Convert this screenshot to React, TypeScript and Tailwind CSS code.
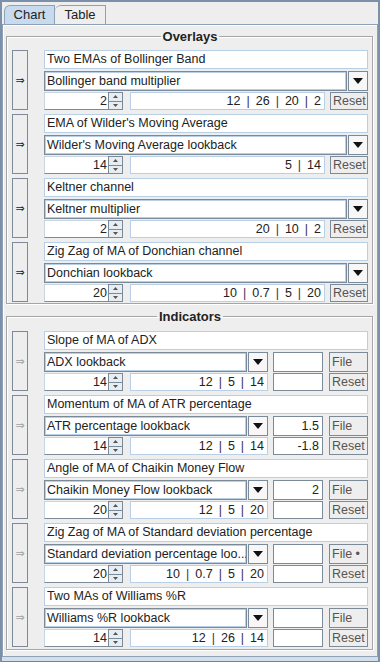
import React from "react";

type Overlay = { title: string; combo: string; spin: string; values: string };
type Indicator = Overlay & { top: string; bottom: string; file: string };

const overlays: Overlay[] = [
  { title: "Two EMAs of Bollinger Band", combo: "Bollinger band multiplier", spin: "2", values: "12 | 26 | 20 | 2" },
  { title: "EMA of Wilder's Moving Average", combo: "Wilder's Moving Average lookback", spin: "14", values: "5 | 14" },
  { title: "Keltner channel", combo: "Keltner multiplier", spin: "2", values: "20 | 10 | 2" },
  { title: "Zig Zag of MA of Donchian channel", combo: "Donchian lookback", spin: "20", values: "10 | 0.7 | 5 | 20" },
];

const indicators: Indicator[] = [
  { title: "Slope of MA of ADX", combo: "ADX lookback", spin: "14", values: "12 | 5 | 14", top: "", bottom: "", file: "File" },
  { title: "Momentum of MA of ATR percentage", combo: "ATR percentage lookback", spin: "14", values: "12 | 5 | 14", top: "1.5", bottom: "-1.8", file: "File" },
  { title: "Angle of MA of Chaikin Money Flow", combo: "Chaikin Money Flow lookback", spin: "20", values: "12 | 5 | 20", top: "2", bottom: "", file: "File" },
  { title: "Zig Zag of MA of Standard deviation percentage", combo: "Standard deviation percentage loo...", spin: "20", values: "10 | 0.7 | 5 | 20", top: "", bottom: "", file: "File •" },
  { title: "Two MAs of Williams %R", combo: "Williams %R lookback", spin: "14", values: "12 | 26 | 14", top: "", bottom: "", file: "File" },
];

function ArrowButton({ enabled }: { enabled: boolean }) {
  return (
    <div
      className={`w-[16px] shrink-0 flex items-center justify-center border border-[#7a8a99] bg-[#eeeeee] text-[11px] leading-none font-['DejaVu_Sans',sans-serif] ${
        enabled ? "text-[#222]" : "text-[#a0a0a0]"
      }`}
    >
      ⇒
    </div>
  );
}

function Combo({ text, className }: { text: string; className: string }) {
  return (
    <div className={`h-[20px] flex ${className}`}>
      <div className="flex-1 min-w-0 flex items-center border border-[#7a8a99] shadow-[inset_1px_1px_0_#b8cfe5,inset_-1px_-1px_0_#b8cfe5] bg-white px-[2px] whitespace-nowrap overflow-hidden">
        {text}
      </div>
      <div className="w-[20px] shrink-0 ml-[1px] flex items-center justify-center border border-[#7a8a99] bg-[#f7f7f7]">
        <svg width="10" height="6" viewBox="0 0 10 6">
          <path d="M0 0h10L5 6z" fill="#111" />
        </svg>
      </div>
    </div>
  );
}

function Spinner({ value, className }: { value: string; className: string }) {
  return (
    <div className={`flex h-[18px] ${className}`}>
      <div className="flex-1 flex items-center justify-end pr-[1px] bg-white border-t border-l border-b border-t-[#c9d6e2] border-l-[#c9d6e2] border-b-[#7a8a99]">
        {value}
      </div>
      <div className="w-[15px] shrink-0 flex flex-col border border-[#7a8a99] bg-[#e8edf2]">
        <div className="flex-1 flex items-center justify-center border-b border-[#7a8a99]">
          <svg width="5" height="3" viewBox="0 0 5 3">
            <path d="M0 3h5L2.5 0z" fill="#555" />
          </svg>
        </div>
        <div className="flex-1 flex items-center justify-center">
          <svg width="5" height="3" viewBox="0 0 5 3">
            <path d="M0 0h5L2.5 3z" fill="#555" />
          </svg>
        </div>
      </div>
    </div>
  );
}

function Values({ text, className }: { text: string; className: string }) {
  const parts = text.split(" | ");
  return (
    <div className={`h-[18px] flex items-center justify-end pr-[3px] bg-white border border-[#b8cfe5] whitespace-nowrap ${className}`}>
      {parts.map((p, i) => (
        <React.Fragment key={i}>
          {i > 0 && <span className="px-[6px] text-[#3b2f5a]">|</span>}
          <span>{p}</span>
        </React.Fragment>
      ))}
    </div>
  );
}

function SmallField({ value, className }: { value: string; className: string }) {
  return (
    <div className={`w-[50px] flex items-center justify-end pr-[3px] bg-white border border-[#7a8a99] shadow-[inset_-1px_-1px_0_#ffffff] ${className}`}>
      {value}
    </div>
  );
}

function SmallButton({ label, className }: { label: string; className: string }) {
  return (
    <div className={`flex items-center pl-[2px] border border-[#7a8a99] bg-[#eeeeee] text-[#555] whitespace-nowrap overflow-hidden ${className}`}>
      {label}
    </div>
  );
}

function TitleField({ text }: { text: string }) {
  return (
    <div className="h-[19px] flex items-center px-[2px] bg-white border border-[#b8cfe5] whitespace-nowrap overflow-hidden">
      {text}
    </div>
  );
}

function OverlayRow({ row }: { row: Overlay }) {
  return (
    <div className="flex h-[60px]">
      <ArrowButton enabled />
      <div className="flex-1 ml-[16px] flex flex-col">
        <TitleField text={row.title} />
        <Combo text={row.combo} className="mt-[2px]" />
        <div className="flex mt-[1px]">
          <Spinner value={row.spin} className="w-[79px]" />
          <Values text={row.values} className="flex-1 ml-[7px]" />
          <SmallButton label="Reset" className="w-[38px] h-[18px] ml-[5px]" />
        </div>
      </div>
    </div>
  );
}

function IndicatorRow({ row }: { row: Indicator }) {
  return (
    <div className="flex h-[60px]">
      <ArrowButton enabled={false} />
      <div className="flex-1 ml-[16px] flex flex-col">
        <TitleField text={row.title} />
        <div className="flex mt-[2px]">
          <Combo text={row.combo} className="w-[224px]" />
          <SmallField value={row.top} className="h-[20px] ml-[5px]" />
          <SmallButton label={row.file} className="w-[39px] h-[20px] ml-[6px]" />
        </div>
        <div className="flex mt-[1px]">
          <Spinner value={row.spin} className="w-[79px]" />
          <Values text={row.values} className="flex-1 ml-[7px]" />
          <SmallField value={row.bottom} className="h-[18px] ml-[5px]" />
          <SmallButton label="Reset" className="w-[39px] h-[18px] ml-[6px]" />
        </div>
      </div>
    </div>
  );
}

function Group({ title, children, className }: { title: string; children: React.ReactNode; className?: string }) {
  return (
    <fieldset
      className={`border border-[#a5a5a5] shadow-[inset_1px_1px_0_#ffffff,1px_1px_0_#ffffff] pl-[5px] pr-[4px] ${className ?? ""}`}
    >
      <legend className="mx-auto px-[2px] font-bold text-[13px] leading-[15px]">{title}</legend>
      {children}
    </fieldset>
  );
}

export default function App() {
  return (
    <div className="w-[380px] h-[662px] bg-[#eeeeee] border-t-2 border-l-2 border-r-2 border-[#7c90aa] flex flex-col text-[12.5px] text-[#222] font-['Liberation_Sans',Arial,sans-serif] overflow-hidden">
      {/* tabs */}
      <div className="h-[22px] flex items-end pl-[2px] text-[13px]">
        <div className="h-[19px] w-[51px] flex items-center justify-center rounded-tl-[6px] border border-b-0 border-[#8da2b8] bg-[#c8dbee]">
          Chart
        </div>
        <div className="h-[19px] w-[51px] flex items-center justify-center rounded-tl-[6px] border border-b-0 border-l-0 border-[#8da2b8] bg-[#eeeeee]">
          Table
        </div>
      </div>

      {/* panel */}
      <div className="h-[633px] border border-[#8da2b8] pt-[4px] pl-[3px] pr-[4px] shadow-[inset_1px_1px_0_#ffffff]">
        <Group title="Overlays" className="pt-[6px] pb-[1px]">
          <div className="flex flex-col gap-[4px]">
            {overlays.map((r) => (
              <OverlayRow key={r.title} row={r} />
            ))}
          </div>
        </Group>
        <Group title="Indicators" className="mt-[5px] pt-[7px] pb-[2px]">
          <div className="flex flex-col gap-[4px]">
            {indicators.map((r) => (
              <IndicatorRow key={r.title} row={r} />
            ))}
          </div>
        </Group>
      </div>

      {/* window bottom edge */}
      <div className="flex-1 bg-[#d3deea] border-b border-[#6f84a0]" />
    </div>
  );
}
